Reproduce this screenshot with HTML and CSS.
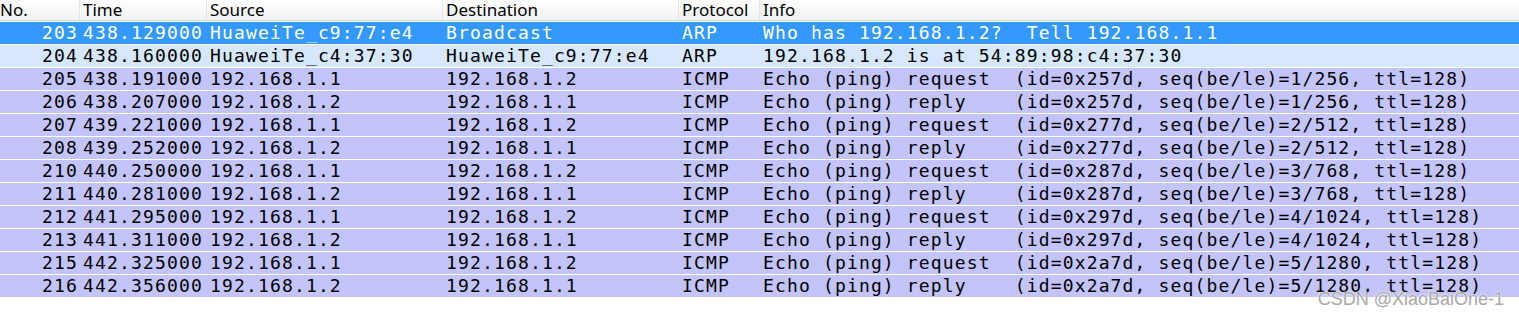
FILE: index.html
```html
<!DOCTYPE html>
<html lang="en">

<head>
  <meta charset="UTF-8">
  <title>Packet list</title>
  <link rel="stylesheet" href="styles.css">
</head>

<body>
  <div class="packet_list">
    <div class="head">
      <div class="col">No.</div>
      <div class="col">Time</div>
      <div class="col">Source</div>
      <div class="col">Destination</div>
      <div class="col">Protocol</div>
      <div class="col last">Info</div>
    </div>

    <div class="row selected">
      <div class="no">203</div><div>438.129000</div><div>HuaweiTe_c9:77:e4</div><div>Broadcast</div><div>ARP</div><div>Who has 192.168.1.2?  Tell 192.168.1.1</div>
    </div>
    <div class="row arp">
      <div class="no">204</div><div>438.160000</div><div>HuaweiTe_c4:37:30</div><div>HuaweiTe_c9:77:e4</div><div>ARP</div><div>192.168.1.2 is at 54:89:98:c4:37:30</div>
    </div>
    <div class="row icmp">
      <div class="no">205</div><div>438.191000</div><div>192.168.1.1</div><div>192.168.1.2</div><div>ICMP</div><div>Echo (ping) request  (id=0x257d, seq(be/le)=1/256, ttl=128)</div>
    </div>
    <div class="row icmp">
      <div class="no">206</div><div>438.207000</div><div>192.168.1.2</div><div>192.168.1.1</div><div>ICMP</div><div>Echo (ping) reply    (id=0x257d, seq(be/le)=1/256, ttl=128)</div>
    </div>
    <div class="row icmp">
      <div class="no">207</div><div>439.221000</div><div>192.168.1.1</div><div>192.168.1.2</div><div>ICMP</div><div>Echo (ping) request  (id=0x277d, seq(be/le)=2/512, ttl=128)</div>
    </div>
    <div class="row icmp">
      <div class="no">208</div><div>439.252000</div><div>192.168.1.2</div><div>192.168.1.1</div><div>ICMP</div><div>Echo (ping) reply    (id=0x277d, seq(be/le)=2/512, ttl=128)</div>
    </div>
    <div class="row icmp">
      <div class="no">210</div><div>440.250000</div><div>192.168.1.1</div><div>192.168.1.2</div><div>ICMP</div><div>Echo (ping) request  (id=0x287d, seq(be/le)=3/768, ttl=128)</div>
    </div>
    <div class="row icmp">
      <div class="no">211</div><div>440.281000</div><div>192.168.1.2</div><div>192.168.1.1</div><div>ICMP</div><div>Echo (ping) reply    (id=0x287d, seq(be/le)=3/768, ttl=128)</div>
    </div>
    <div class="row icmp">
      <div class="no">212</div><div>441.295000</div><div>192.168.1.1</div><div>192.168.1.2</div><div>ICMP</div><div>Echo (ping) request  (id=0x297d, seq(be/le)=4/1024, ttl=128)</div>
    </div>
    <div class="row icmp">
      <div class="no">213</div><div>441.311000</div><div>192.168.1.2</div><div>192.168.1.1</div><div>ICMP</div><div>Echo (ping) reply    (id=0x297d, seq(be/le)=4/1024, ttl=128)</div>
    </div>
    <div class="row icmp">
      <div class="no">215</div><div>442.325000</div><div>192.168.1.1</div><div>192.168.1.2</div><div>ICMP</div><div>Echo (ping) request  (id=0x2a7d, seq(be/le)=5/1280, ttl=128)</div>
    </div>
    <div class="row icmp">
      <div class="no">216</div><div>442.356000</div><div>192.168.1.2</div><div>192.168.1.1</div><div>ICMP</div><div>Echo (ping) reply    (id=0x2a7d, seq(be/le)=5/1280, ttl=128)</div>
    </div>
  </div>

  <div class="watermark">CSDN @XiaoBaiOne-1</div>
</body>

</html>
```

FILE: styles.css
```css
html,
body {
  width: 100%;
  height: 100%;
  overflow: hidden;
}

body {
  margin: 0;
  background-color: #fff;
  position: relative;
}

.packet_list {
  width: 100%;
}

.head,
.row {
  display: grid;
  grid-template-columns: 80px 127px 236px 236px 81px 1fr;
}

.head {
  height: 20px;
  border-bottom: 1px solid #d5d5d5;
  background: linear-gradient(#ffffff, #f1f2f4);
  font-family: 'Noto Sans', sans-serif;
  font-size: 17px;
  line-height: 20px;
  color: #000;
}

.head .col {
  padding-left: 3px;
  border-right: 1px solid #e3e3e3;
  white-space: nowrap;
}

.head .col:first-child {
  padding-left: 0;
}

.head .col.last {
  border-right: none;
}

.row {
  height: 22px;
  border-top: 1px solid #fff;
  font-family: 'DejaVu Sans Mono', monospace;
  font-size: 18px;
  letter-spacing: 1.15px;
  line-height: 22px;
  color: #000;
}

.row>div {
  padding-left: 3px;
  white-space: pre;
}

.row>div.no {
  text-align: right;
  padding-left: 0;
  padding-right: 2px;
}

.selected {
  background-color: #3399ff;
  color: #fff;
}

.arp {
  background-color: #d7e8fe;
}

.icmp {
  background-color: #c4c4fc;
}

.watermark {
  position: absolute;
  right: 15px;
  top: 289px;
  font-family: 'Liberation Sans', sans-serif;
  font-size: 18px;
  color: #a8a8a8;
  text-shadow: 0 0 2px #fff, 0 0 1px #fff;
}
```
